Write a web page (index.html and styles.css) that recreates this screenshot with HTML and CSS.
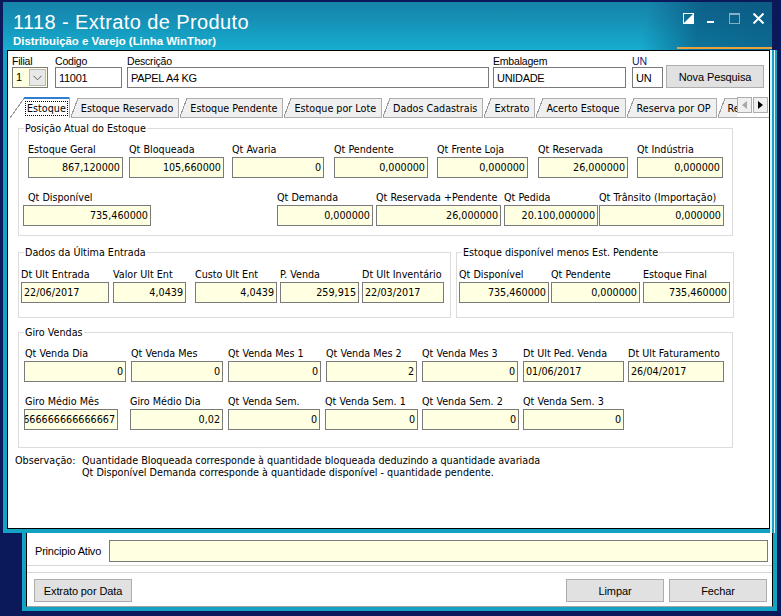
FILE: index.html
```html
<!DOCTYPE html>
<html lang="pt-BR">
<head>
<meta charset="utf-8">
<title>1118 - Extrato de Produto</title>
<link rel="stylesheet" href="styles.css">
</head>
<body>
<div class="screen">
  <div class="toprow">
    <div class="win">
      <div class="titlebar">
        <div class="titles">
          <div class="title">1118 - Extrato de Produto</div>
          <div class="subtitle">Distribuição e Varejo (Linha WinThor)</div>
        </div>
        <svg class="wctl" width="81" height="11" viewBox="0 0 81 11">
          <rect x="0.5" y="0.5" width="10" height="10" fill="none" stroke="#fff"/>
          <path d="M10.5 0.5 V10.5 H0.5 Z" fill="#fff"/>
          <rect x="24" y="8" width="7" height="2" fill="#fff"/>
          <rect x="46.5" y="0.5" width="10" height="10" fill="none" stroke="#86aec4"/>
          <rect x="46" y="0" width="11" height="2" fill="#86aec4"/>
          <path d="M70.5 0.5 L80.5 10.5 M80.5 0.5 L70.5 10.5" stroke="#fff" stroke-width="2"/>
        </svg>
      </div>
      <div class="client">
        <div class="head">
          <div class="hf w36">
            <div class="hl">Filial</div>
            <div class="combo"><span class="cv">1</span><span class="cbtn"><svg width="9" height="6" viewBox="0 0 9 6"><path d="M0.5 0.8 L4.5 4.8 L8.5 0.8" fill="none" stroke="#606060"/></svg></span></div>
          </div>
          <div class="hf w67 ml7">
            <div class="hl">Codigo</div>
            <div class="hbox">11001</div>
          </div>
          <div class="hf w362 ml5">
            <div class="hl">Descrição</div>
            <div class="hbox">PAPEL A4 KG</div>
          </div>
          <div class="hf w133 ml4">
            <div class="hl">Embalagem</div>
            <div class="hbox">UNIDADE</div>
          </div>
          <div class="hf w31 ml6">
            <div class="hl un">UN</div>
            <div class="hbox">UN</div>
          </div>
          <div class="btn w98 ml3">Nova Pesquisa</div>
        </div>

        <div class="tabbar">
          <div class="tabs">
            <div class="tab sel"><span class="focus">Estoque</span></div>
            <div class="tab">Estoque Reservado</div>
            <div class="tab">Estoque Pendente</div>
            <div class="tab">Estoque por Lote</div>
            <div class="tab">Dados Cadastrais</div>
            <div class="tab">Extrato</div>
            <div class="tab">Acerto Estoque</div>
            <div class="tab">Reserva por OP</div>
            <div class="tab">Reservas</div>
          </div>
          <div class="scroller">
            <span class="sbtn"><svg width="5" height="8" viewBox="0 0 5 8"><path d="M5 0 V8 L0 4 Z" fill="#a8a8a8"/></svg></span>
            <span class="sbtn"><svg width="5" height="8" viewBox="0 0 5 8"><path d="M0 0 V8 L5 4 Z" fill="#000"/></svg></span>
          </div>
        </div>

        <div class="panel">
          <fieldset class="grp g1">
            <legend>Posição Atual do Estoque</legend>
            <div class="row pl9">
              <div class="gf w95"><div class="gl">Estoque Geral</div><div class="val"><span>867,120000</span></div></div>
              <div class="gf w95 ml6"><div class="gl">Qt Bloqueada</div><div class="val"><span>105,660000</span></div></div>
              <div class="gf w92 ml8"><div class="gl">Qt Avaria</div><div class="val"><span>0</span></div></div>
              <div class="gf w94 ml10"><div class="gl">Qt Pendente</div><div class="val"><span>0,000000</span></div></div>
              <div class="gf w91 ml9"><div class="gl">Qt Frente Loja</div><div class="val"><span>0,000000</span></div></div>
              <div class="gf w90 ml10"><div class="gl">Qt Reservada</div><div class="val"><span>26,000000</span></div></div>
              <div class="gf w86 ml9"><div class="gl">Qt Indústria</div><div class="val"><span>0,000000</span></div></div>
            </div>
            <div class="row r2 pl4 pr8">
              <div class="gf w128"><div class="gl in5">Qt Disponível</div><div class="val"><span>735,460000</span></div></div>
              <div class="gf w96 push"><div class="gl">Qt Demanda</div><div class="val"><span>0,000000</span></div></div>
              <div class="gf w125 ml3"><div class="gl">Qt Reservada +Pendente</div><div class="val"><span>26,000000</span></div></div>
              <div class="gf w94 ml3"><div class="gl">Qt Pedida</div><div class="val"><span>20.100,000000</span></div></div>
              <div class="gf w125 ml1"><div class="gl">Qt Trânsito (Importação)</div><div class="val"><span>0,000000</span></div></div>
            </div>
          </fieldset>

          <div class="pair">
            <fieldset class="grp g2">
              <legend>Dados da Última Entrada</legend>
              <div class="row pl2">
                <div class="gf w88"><div class="gl">Dt Ult Entrada</div><div class="val left"><span>22/06/2017</span></div></div>
                <div class="gf w73 ml4"><div class="gl">Valor Ult Ent</div><div class="val"><span>4,0439</span></div></div>
                <div class="gf w82 ml9"><div class="gl">Custo Ult Ent</div><div class="val"><span>4,0439</span></div></div>
                <div class="gf w79 ml3"><div class="gl">P. Venda</div><div class="val"><span>259,915</span></div></div>
                <div class="gf w82 ml3"><div class="gl">Dt Ult Inventário</div><div class="val left"><span>22/03/2017</span></div></div>
              </div>
            </fieldset>
            <fieldset class="grp g3">
              <legend>Estoque disponível menos Est. Pendente</legend>
              <div class="row pl2">
                <div class="gf w90"><div class="gl">Qt Disponível</div><div class="val"><span>735,460000</span></div></div>
                <div class="gf w89 ml2"><div class="gl">Qt Pendente</div><div class="val"><span>0,000000</span></div></div>
                <div class="gf w87 ml3"><div class="gl">Estoque Final</div><div class="val"><span>735,460000</span></div></div>
              </div>
            </fieldset>
          </div>

          <fieldset class="grp g4">
            <legend>Giro Vendas</legend>
            <div class="row pl5">
              <div class="gf w102"><div class="gl in1">Qt Venda Dia</div><div class="val"><span>0</span></div></div>
              <div class="gf w92 ml5"><div class="gl">Qt Venda Mes</div><div class="val"><span>0</span></div></div>
              <div class="gf w93 ml5"><div class="gl">Qt Venda Mes 1</div><div class="val"><span>0</span></div></div>
              <div class="gf w91 ml5"><div class="gl">Qt Venda Mes 2</div><div class="val"><span>2</span></div></div>
              <div class="gf w96 ml5"><div class="gl">Qt Venda Mes 3</div><div class="val"><span>0</span></div></div>
              <div class="gf w101 ml5"><div class="gl">Dt Ult Ped. Venda</div><div class="val left"><span>01/06/2017</span></div></div>
              <div class="gf w96 ml4"><div class="gl">Dt Ult Faturamento</div><div class="val left"><span>26/04/2017</span></div></div>
            </div>
            <div class="row r2 pl5">
              <div class="gf w94"><div class="gl in1">Giro Médio Mês</div><div class="val"><span>0,0666666666666667</span></div></div>
              <div class="gf w93 ml12"><div class="gl">Giro Médio Dia</div><div class="val"><span>0,02</span></div></div>
              <div class="gf w92 ml5"><div class="gl">Qt Venda Sem.</div><div class="val"><span>0</span></div></div>
              <div class="gf w93 ml5"><div class="gl">Qt Venda Sem. 1</div><div class="val"><span>0</span></div></div>
              <div class="gf w97 ml4"><div class="gl">Qt Venda Sem. 2</div><div class="val"><span>0</span></div></div>
              <div class="gf w101 ml4"><div class="gl">Qt Venda Sem. 3</div><div class="val"><span>0</span></div></div>
            </div>
          </fieldset>

          <div class="obs">
            <div class="obs-label">Observação:</div>
            <div class="obs-text">
              <div>Quantidade Bloqueada corresponde à quantidade bloqueada deduzindo a quantidade avariada</div>
              <div>Qt Disponível Demanda corresponde à quantidade disponível - quantidade pendente.</div>
            </div>
          </div>
        </div>
      </div>
    </div>
    <div class="back-edge"></div>
  </div>

  <div class="back">
    <div class="back-client">
      <div class="pa-row">
        <div class="pa-label">Principio Ativo</div>
        <div class="pa-input"></div>
      </div>
      <div class="btn-row">
        <div class="btn w98">Extrato por Data</div>
        <div class="btn w98 push">Limpar</div>
        <div class="btn w98 ml5">Fechar</div>
      </div>
    </div>
  </div>
</div>
</body>
</html>
```

FILE: styles.css
```css
* { box-sizing: border-box; }
html, body { margin: 0; padding: 0; }
body {
  width: 781px;
  height: 616px;
  overflow: hidden;
  background: #0b185a;
  font-family: "DejaVu Sans Condensed", "DejaVu Sans", sans-serif;
  font-stretch: condensed;
  font-size: 10.7px;
  color: #000;
}
.screen { padding-top: 2px; }
.toprow { display: flex; align-items: stretch; }

/* front window */
.win {
  margin-left: 3px;
  width: 769px;
  background: linear-gradient(to left, #dff2f7 2px, #13a1c4 2px);
  padding-bottom: 4px;
}
.titlebar {
  height: 48px;
  display: flex;
  justify-content: space-between;
  align-items: flex-start;
  padding: 10px 8px 0 10px;
  color: #fff;
  background:
    linear-gradient(#e9a23b, #e9a23b) right 0 bottom 1px / 95px 2px no-repeat,
    linear-gradient(100deg, rgba(5, 60, 100, 0) 0%, rgba(5, 60, 100, 0) 83%, rgba(4, 62, 104, 0.5) 90%, rgba(4, 62, 104, 0.6) 100%),
    linear-gradient(to bottom, #1683aa 0%, #168fb5 35%, #15a2c5 75%, #18add0 100%);
}
.title {
  font-family: "Liberation Sans", Arial, sans-serif;
  font-stretch: normal;
  font-size: 20px;
  line-height: 20px;
  letter-spacing: 0.4px;
}
.subtitle {
  font-family: "Liberation Sans", Arial, sans-serif;
  font-stretch: normal;
  font-weight: bold;
  font-size: 11.4px;
  line-height: 13px;
  margin-top: 3px;
}
.wctl { display: block; margin-top: 1px; }

.client {
  margin: 0 2px 0 4px;
  height: 479px;
  border: 1px solid #000;
  background: #fff;
  padding: 4px 0 0 4px;
}

/* header row */
.head {
  display: flex;
  align-items: flex-end;
  font-family: "Liberation Sans", Arial, sans-serif;
  font-stretch: normal;
  font-size: 10.5px;
  letter-spacing: -0.2px;
}
.hf { flex: none; }
.hl { height: 12px; line-height: 12px; white-space: nowrap; }
.hl.un { color: #14206e; }
.hbox {
  height: 21px;
  border: 1px solid #7a7a7a;
  background: #fff;
  padding: 0 3px;
  display: flex;
  align-items: center;
  font-size: 11px;
  letter-spacing: -0.3px;
  white-space: nowrap;
  overflow: hidden;
}
.combo {
  height: 21px;
  border: 1px solid #7a7a7a;
  background: #ffffe1;
  display: flex;
  font-size: 11px;
}
.cv { flex: 1; padding-left: 3px; line-height: 19px; }
.cbtn {
  width: 17px;
  margin: 1px;
  background: #e8e8e8;
  border: 1px solid #b8b8b8;
  display: flex;
  align-items: center;
  justify-content: center;
}

.btn {
  flex: none;
  height: 23px;
  background: #e1e1e1;
  border: 1px solid #adadad;
  display: flex;
  align-items: center;
  justify-content: center;
  font-family: "Liberation Sans", Arial, sans-serif;
  font-stretch: normal;
  font-size: 11px;
  letter-spacing: -0.1px;
  white-space: nowrap;
}

/* tabs */
.tabbar {
  display: flex;
  height: 21px;
  margin-top: 9px;
  margin-left: -2px;
}
.tabs {
  flex: 1;
  min-width: 0;
  display: flex;
  align-items: flex-end;
  overflow: hidden;
  height: 21px;
}
.tab {
  flex: none;
  height: 20px;
  padding: 2px 5px 0 10px;
  line-height: 18px;
  margin-right: 1px;
  white-space: nowrap;
  border-right: 1px solid #adadad;
  border-bottom: 1px solid #adadad;
  background:
    linear-gradient(#adadad, #adadad) 6px 0 / 100% 1px no-repeat,
    linear-gradient(to bottom right, #fff calc(50% - 0.5px), #9a9a9a calc(50% - 0.5px), #9a9a9a calc(50% + 0.5px), #f0f0f0 calc(50% + 0.5px)) 0 0 / 7px 100% no-repeat,
    #f0f0f0;
}
.tab.sel {
  height: 21px;
  border-bottom: 0;
  padding: 5px 2px 4px 16px;
  line-height: 12px;
  background:
    linear-gradient(#2f7fd0, #2f7fd0) 14px 0 / 100% 2px no-repeat,
    linear-gradient(to bottom right, #fff calc(50% - 0.5px), #9a9a9a calc(50% - 0.5px), #9a9a9a calc(50% + 0.5px), #fff calc(50% + 0.5px)) 0 0 / 15px 100% no-repeat,
    #fff;
}
.focus {
  display: inline-block;
  height: 13px;
  line-height: 14px;
  padding: 0 1px;
  outline: 1px dotted #000;
}
.scroller {
  flex: none;
  width: 32px;
  display: flex;
  align-items: flex-start;
  gap: 1px;
  border-bottom: 1px solid #adadad;
}
.sbtn {
  width: 15px;
  height: 16px;
  background: #f0f0f0;
  border: 1px solid #adadad;
  display: flex;
  align-items: center;
  justify-content: center;
}

/* panel + groups */
.panel { padding: 4px 0 0 6px; }
.grp {
  margin: 0;
  min-width: 0;
  border: 1px solid #dcdcdc;
  padding: 6px 0 9px 0;
}
.grp legend {
  padding: 0 1px;
  margin-left: 5px;
  line-height: 13px;
}
.g1 { width: 715px; }
.pair { display: flex; gap: 5px; margin-top: 10px; }
.g2 { width: 433px; padding: 7px 0 14px 0; }
.g3 { width: 278px; padding: 7px 0 14px 0; }
.g4 { width: 715px; margin-top: 8px; padding: 6px 0 17px 0; }

.row { display: flex; }
.row.r2 { margin-top: 11px; }
.pl2 { padding-left: 2px; }
.pl4 { padding-left: 4px; }
.pl5 { padding-left: 5px; }
.pl9 { padding-left: 9px; }
.pr8 { padding-right: 8px; }

.gf { flex: none; }
.gl {
  height: 16px;
  line-height: 17px;
  white-space: nowrap;
}
.gl.in5 { padding-left: 5px; }
.gl.in1 { padding-left: 1px; }
.val {
  height: 21px;
  border: 1px solid #7a7a7a;
  background: #ffffe1;
  padding: 0 2px 0 2px;
  display: flex;
  align-items: center;
  justify-content: flex-end;
  overflow: hidden;
  white-space: nowrap;
}
.val span { flex: none; }
.val.left { justify-content: flex-start; }

.obs {
  display: flex;
  margin: 7px 0 0 -3px;
  line-height: 12px;
}
.obs-label { width: 67px; flex: none; }

/* right strip of the window behind */
.back-edge {
  width: 5px;
  margin-top: 48px;
  background: linear-gradient(to right, #13a1c4 0 2px, #e6f6fa 2px 3px, #13a1c4 3px 5px);
}

/* window behind */
.back {
  margin-left: 22px;
  width: 755px;
  border: 0 solid #13a1c4;
  border-width: 0 4px 4px 4px;
}
.back-client {
  height: 74px;
  background: #fff;
  border-left: 1px solid #000;
  border-right: 1px solid #000;
  border-bottom: 1px solid #a3a3a3;
  font-family: "Liberation Sans", Arial, sans-serif;
  font-stretch: normal;
  font-size: 11px;
}
.pa-row {
  display: flex;
  align-items: center;
  padding: 7px 4px 3px 8px;
  border-bottom: 1px solid #d7d7d7;
}
.pa-label { width: 74px; flex: none; letter-spacing: -0.2px; }
.pa-input {
  flex: 1;
  height: 22px;
  border: 1px solid #7a7a7a;
  background: #ffffe1;
}
.btn-row {
  display: flex;
  margin-top: 6px;
  border-top: 1px solid #d7d7d7;
  padding: 6px 5px 0 7px;
}

/* sizes */
.w31 { width: 31px; }
.w36 { width: 36px; }
.w67 { width: 67px; }
.w73 { width: 73px; }
.w79 { width: 79px; }
.w82 { width: 82px; }
.w86 { width: 86px; }
.w87 { width: 87px; }
.w88 { width: 88px; }
.w89 { width: 89px; }
.w90 { width: 90px; }
.w91 { width: 91px; }
.w92 { width: 92px; }
.w93 { width: 93px; }
.w94 { width: 94px; }
.w95 { width: 95px; }
.w96 { width: 96px; }
.w97 { width: 97px; }
.w98 { width: 98px; }
.w101 { width: 101px; }
.w102 { width: 102px; }
.w125 { width: 125px; }
.w128 { width: 128px; }
.w133 { width: 133px; }
.w362 { width: 362px; }
.ml1 { margin-left: 1px; }
.ml2 { margin-left: 2px; }
.ml3 { margin-left: 3px; }
.ml4 { margin-left: 4px; }
.ml5 { margin-left: 5px; }
.ml6 { margin-left: 6px; }
.ml7 { margin-left: 7px; }
.ml8 { margin-left: 8px; }
.ml9 { margin-left: 9px; }
.ml10 { margin-left: 10px; }
.ml12 { margin-left: 12px; }
.push { margin-left: auto; }
```
